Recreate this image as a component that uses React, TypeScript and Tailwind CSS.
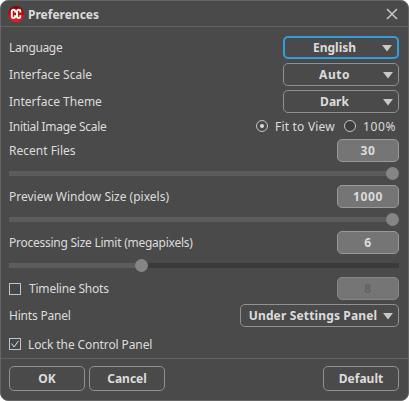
import type { ReactNode } from "react";

function Select({ text, className }: { text: string; className: string }) {
  return (
    <button className={`flex h-[23px] items-center rounded-[5px] pr-[5px] font-bold ${className}`}>
      <span className="flex-1 pl-[2px] text-center whitespace-nowrap">{text}</span>
      <svg width="10" height="7" viewBox="0 0 10 7" className="mt-px shrink-0">
        <path d="M0 0h10L5 6.5z" fill="#c8c8c8" />
      </svg>
    </button>
  );
}

function Value({ text, disabled }: { text: string; disabled?: boolean }) {
  return (
    <div
      className={`flex h-[23px] w-[62px] items-center justify-center rounded-[5px] border bg-[#757575] font-bold tracking-[0.6px] ${
        disabled ? "border-[#858585] text-[#636363]" : "border-[#999999]"
      }`}
    >
      {text}
    </div>
  );
}

function Row({ children, className }: { children: ReactNode; className: string }) {
  return <div className={`flex items-center justify-between ${className}`}>{children}</div>;
}

function Slider({ value }: { value: number }) {
  return (
    <div className="relative mt-[9px] h-[5px] bg-[#3b3b3b]">
      <div className="h-full bg-[#5c5c5c]" style={{ width: value }} />
      <div className="absolute -top-1 size-[13px] rounded-full bg-[#858585]" style={{ left: value - 7 }} />
    </div>
  );
}

function Button({ text, className }: { text: string; className?: string }) {
  return (
    <button
      className={`flex h-[25px] w-[76px] items-center justify-center rounded-[5px] border border-[#919191] font-bold ${className ?? ""}`}
    >
      {text}
    </button>
  );
}

export default function App() {
  return (
    <div className="h-[401px] w-[409px] bg-white font-['Noto_Sans','Liberation_Sans',sans-serif] text-[12px] leading-[18px] text-[#dcdcdc]">
      <div className="flex h-[401px] w-[409px] flex-col rounded-[8px] border border-[#666666] bg-[#4a4a4a]">
        <header className="flex h-[26px] shrink-0 items-center border-b border-[#616161] pr-[10px] pl-[7px] font-bold">
          <svg width="16" height="16" viewBox="0 0 16 16" className="mr-[4px]">
            <defs>
              <linearGradient id="red" x1="0" y1="0" x2="0" y2="1">
                <stop offset="0" stopColor="#850000" />
                <stop offset="1" stopColor="#f51c20" />
              </linearGradient>
            </defs>
            <circle cx="8" cy="8" r="8" fill="url(#red)" />
            <path
              d="M7.1 6.5V5.3C7.1 3.3 3.8 3.3 3.8 5.3v5.2c0 2 3.3 2 3.3 0V9.3M12.3 6.5V5.3c0-2-3.3-2-3.3 0v5.2c0 2 3.3 2 3.3 0V9.3"
              fill="none"
              stroke="#fff"
              strokeWidth="1.9"
            />
          </svg>
          <h1 className="pt-[2px]">Preferences</h1>
          <svg width="12" height="12" viewBox="0 0 12 12" className="ml-auto">
            <path d="M1 1l10 10M11 1L1 11" stroke="#c8c8c8" strokeWidth="1.5" />
          </svg>
        </header>

        <main className="flex flex-1 flex-col pt-[9px] pr-[9px] pl-[8px]">
          <Row className="h-[23px]">
            <span className="tracking-[-0.35px]">Language</span>
            <Select text="English" className="w-[116px] border-2 border-[#349cdc] pr-[4px]" />
          </Row>
          <Row className="mt-1 h-[23px]">
            <span>Interface Scale</span>
            <Select text="Auto" className="w-[116px] border border-[#919191] tracking-[0.5px]" />
          </Row>
          <Row className="mt-1 h-[23px]">
            <span>Interface Theme</span>
            <Select text="Dark" className="w-[116px] border border-[#919191]" />
          </Row>
          <Row className="h-[26px]">
            <span className="pt-px tracking-[-0.3px]">Initial Image Scale</span>
            <div className="flex items-center pr-[3px]">
              <div className="mr-[7px] flex size-3 items-center justify-center rounded-full border border-[#c4c4c4]">
                <div className="size-1 rounded-full bg-[#dcdcdc]" />
              </div>
              <span className="w-[60px] pt-px tracking-[0.2px] whitespace-nowrap">Fit to View</span>
              <div className="mr-[7px] ml-[9px] size-3 rounded-full border border-[#c4c4c4] bg-[#3d3d3d]" />
              <span className="w-[33px] pt-px tracking-[0.6px]">100%</span>
            </div>
          </Row>
          <Row className="h-[23px]">
            <span>Recent Files</span>
            <Value text="30" />
          </Row>
          <Slider value={384} />
          <Row className="mt-[9px] h-[23px]">
            <span>Preview Window Size (pixels)</span>
            <Value text="1000" />
          </Row>
          <Slider value={384} />
          <Row className="mt-[9px] h-[23px]">
            <span className="tracking-[-0.25px]">Processing Size Limit (megapixels)</span>
            <Value text="6" />
          </Row>
          <Slider value={133} />
          <Row className="mt-[9px] h-[23px]">
            <div className="flex items-center">
              <div className="mr-[8px] size-3 border border-[#c4c4c4] bg-[#41474b]" />
              <span className="tracking-[-0.2px]">Timeline Shots</span>
            </div>
            <Value text="8" disabled />
          </Row>
          <Row className="mt-1 h-[23px]">
            <span className="tracking-[-0.2px]">Hints Panel</span>
            <Select text="Under Settings Panel" className="w-[159px] border border-[#919191] tracking-[0.15px]" />
          </Row>
          <div className="mt-[8px] flex h-[18px] items-center">
            <div className="mr-[7px] flex size-3 items-center justify-center border border-[#c4c4c4] bg-[#41474b]">
              <svg width="8" height="8" viewBox="0 0 8 8">
                <path d="M.6 3.5L3 7 7.5.8" fill="none" stroke="#dcdcdc" strokeWidth="1" />
              </svg>
            </div>
            <span className="pt-px tracking-[-0.1px]">Lock the Control Panel</span>
          </div>
        </main>

        <footer className="flex h-[42px] shrink-0 items-start gap-1 border-t border-[#616161] pt-[7px] pr-[9px] pl-[8px]">
          <Button text="OK" />
          <Button text="Cancel" />
          <Button text="Default" className="ml-auto" />
        </footer>
      </div>
    </div>
  );
}
